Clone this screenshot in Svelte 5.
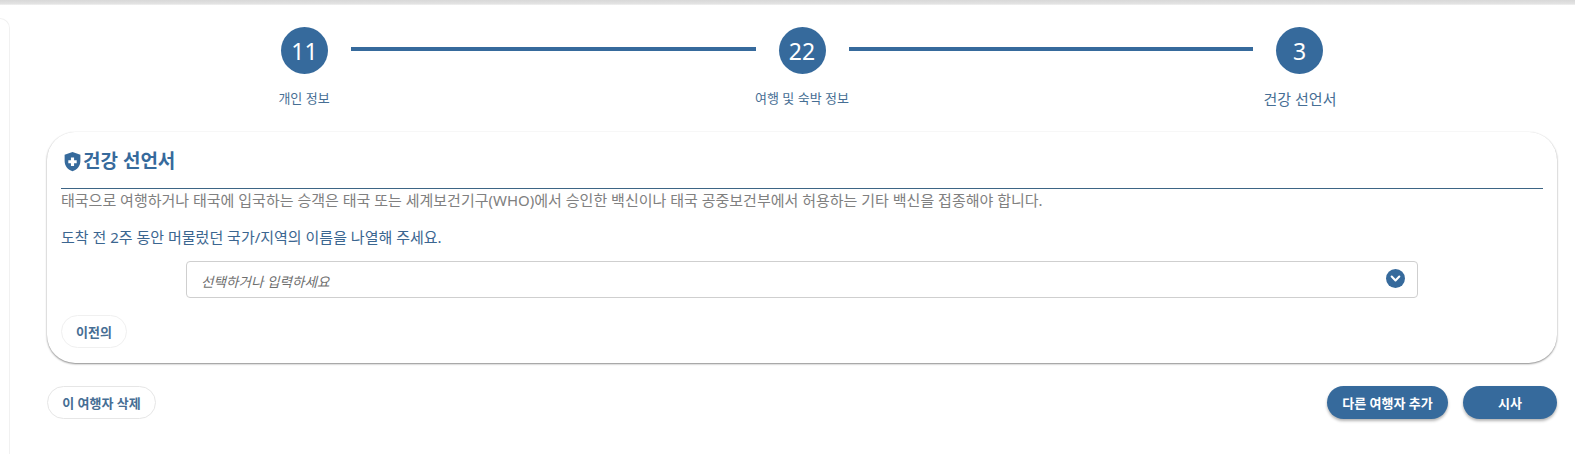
<script lang="ts">
  const steps = [
    { num: '11', label: '개인 정보' },
    { num: '22', label: '여행 및 숙박 정보' },
    { num: '3', label: '건강 선언서', current: true }
  ]
</script>

<div class="top-strip"></div>

<div class="page">
  <aside class="sidebar"></aside>

  <main class="content">
    <div class="stepper">
      <div class="stepper__track">
        {#each steps as step, index}
          {#if index > 0}
            <span class="stepper__line"></span>
          {/if}
          <span class="stepper__circle">{step.num}</span>
        {/each}
      </div>
      <div class="stepper__labels">
        {#each steps as step}
          <span class="stepper__label" class:stepper__label--current={step.current}>{step.label}</span>
        {/each}
      </div>
    </div>

    <section class="card">
      <h2 class="card__title">
        <svg viewBox="0 0 24 24" aria-hidden="true">
          <path fill="#366a9c" fill-rule="evenodd" d="M12 1 3 4.2v7.1c0 5.4 3.7 10.2 9 11.7 5.3-1.500 9-6.300 9-11.700V4.200L12 1zm-1.800 6.500h3.600v3h3v3.600h-3v3h-3.600v-3h-3v-3.600h3v-3z" />
        </svg>
        건강 선언서
      </h2>
      <p class="card__notice">태국으로 여행하거나 태국에 입국하는 승객은 태국 또는 세계보건기구(WHO)에서 승인한 백신이나 태국 공중보건부에서 허용하는 기타 백신을 접종해야 합니다.</p>
      <p class="card__question">도착 전 2주 동안 머물렀던 국가/지역의 이름을 나열해 주세요.</p>

      <div class="select">
        <span class="select__placeholder">선택하거나 입력하세요</span>
        <span class="select__arrow">
          <svg viewBox="0 0 20 20" aria-hidden="true">
            <path d="M6 8l4 4 4-4" fill="none" stroke="#fff" stroke-width="2.200" stroke-linecap="round" stroke-linejoin="round" />
          </svg>
        </span>
      </div>

      <button type="button" class="btn btn--outline btn--prev">이전의</button>
    </section>

    <div class="actions">
      <button type="button" class="btn btn--outline btn--delete">이 여행자 삭제</button>
      <div class="actions__right">
        <button type="button" class="btn btn--primary btn--add">다른 여행자 추가</button>
        <button type="button" class="btn btn--primary btn--preview">시사</button>
      </div>
    </div>
  </main>
</div>

<style>
  :global(body) {
    margin: 0;
    background: #fff;
    font-family: "Noto Sans", "Noto Sans CJK KR", sans-serif;
    color: #366a9c;
  }

  .top-strip {
    height: 5px;
    background: linear-gradient(180deg, #d8d8d8 0%, #e2e2e2 70%, #f2f2f2 100%);
  }

  .page {
    display: flex;
    height: 449px;
    overflow: hidden;
  }

  .sidebar {
    width: 9px;
    flex: none;
    margin-top: 13px;
    border-top: 1px solid #f1f1f1;
    border-right: 1px solid #f1f1f1;
    border-top-right-radius: 10px;
  }

  .content {
    width: 1510px;
    flex: none;
    margin-left: 37px;
    display: flex;
    flex-direction: column;
  }

  .stepper {
    padding-top: 22px;
  }

  .stepper__track {
    display: flex;
    align-items: center;
    justify-content: center;
  }

  .stepper__circle {
    width: 47px;
    height: 47px;
    flex: none;
    border-radius: 50%;
    background: #366a9c;
    color: #fff;
    display: grid;
    place-items: center;
    font-size: 23px;
  }

  .stepper__line {
    width: 404.5px;
    height: 4px;
    margin: -4px 23px 0 23px;
    background: #366a9c;
  }

  .stepper__labels {
    display: grid;
    grid-template-columns: repeat(3, 498px);
    justify-content: center;
    align-items: start;
    height: 58px;
    padding-top: 14px;
    box-sizing: border-box;
  }

  .stepper__label {
    text-align: center;
    font-size: 13px;
    line-height: 20px;
    color: #466e94;
  }

  .stepper__label--current {
    font-size: 15px;
    line-height: 23px;
  }

  .card {
    height: 231px;
    box-sizing: border-box;
    padding: 14px 14px 14px;
    border-radius: 28px;
    background: #fff;
    box-shadow: 0 1px 2px rgba(0, 0, 0, 0.45), 0 0 1px rgba(0, 0, 0, 0.08);
    display: flex;
    flex-direction: column;
  }

  .card__title {
    margin: 0;
    display: flex;
    align-items: center;
    height: 43px;
    border-bottom: 1px solid #3d6585;
    font-size: 19px;
    font-weight: 700;
    color: #366a9c;
    line-height: 30px;
    padding-bottom: 12px;
    box-sizing: border-box;
    padding-left: 1px;
  }

  .card__title svg {
    width: 21px;
    height: 21px;
  }

  .card__notice {
    margin: 0;
    font-size: 15px;
    line-height: 22px;
    color: #808080;
  }

  .card__question {
    margin: 15px 0 0;
    font-size: 15px;
    line-height: 22px;
    color: #3b6690;
  }

  .select {
    margin: 13px 125px 0 125px;
    height: 37px;
    box-sizing: border-box;
    border: 1px solid #cfcfcf;
    border-radius: 4px;
    display: flex;
    align-items: center;
    justify-content: space-between;
    padding: 0 12px 0 14px;
  }

  .select__placeholder {
    font-size: 13.6px;
    font-style: italic;
    color: #6f6f6f;
    padding-top: 3px;
  }

  .select__arrow {
    width: 19px;
    height: 19px;
    border-radius: 50%;
    background: #366a9c;
    display: grid;
    place-items: center;
    margin-top: -2px;
  }

  .select__arrow svg {
    width: 19px;
    height: 19px;
  }

  .btn {
    font-family: inherit;
    font-size: 13px;
    font-weight: 700;
    height: 33px;
    border-radius: 17px;
    padding: 0;
    cursor: pointer;
  }

  .btn--outline {
    background: #fff;
    color: #466e94;
    border: 1px solid #e6e6e6;
  }

  .btn--primary {
    background: #366a9c;
    color: #fff;
    border: none;
    box-shadow: 0 2px 3px rgba(0, 0, 0, 0.3);
  }

  .btn--prev {
    width: 66px;
    margin-top: 17px;
    align-self: flex-start;
    border-color: #f0f0f0;
  }

  .btn--delete {
    width: 109px;
  }

  .btn--add {
    width: 121px;
  }

  .btn--preview {
    width: 94px;
  }

  .actions {
    margin-top: 23px;
    display: flex;
    justify-content: space-between;
  }

  .actions__right {
    display: flex;
    gap: 15px;
  }
</style>
